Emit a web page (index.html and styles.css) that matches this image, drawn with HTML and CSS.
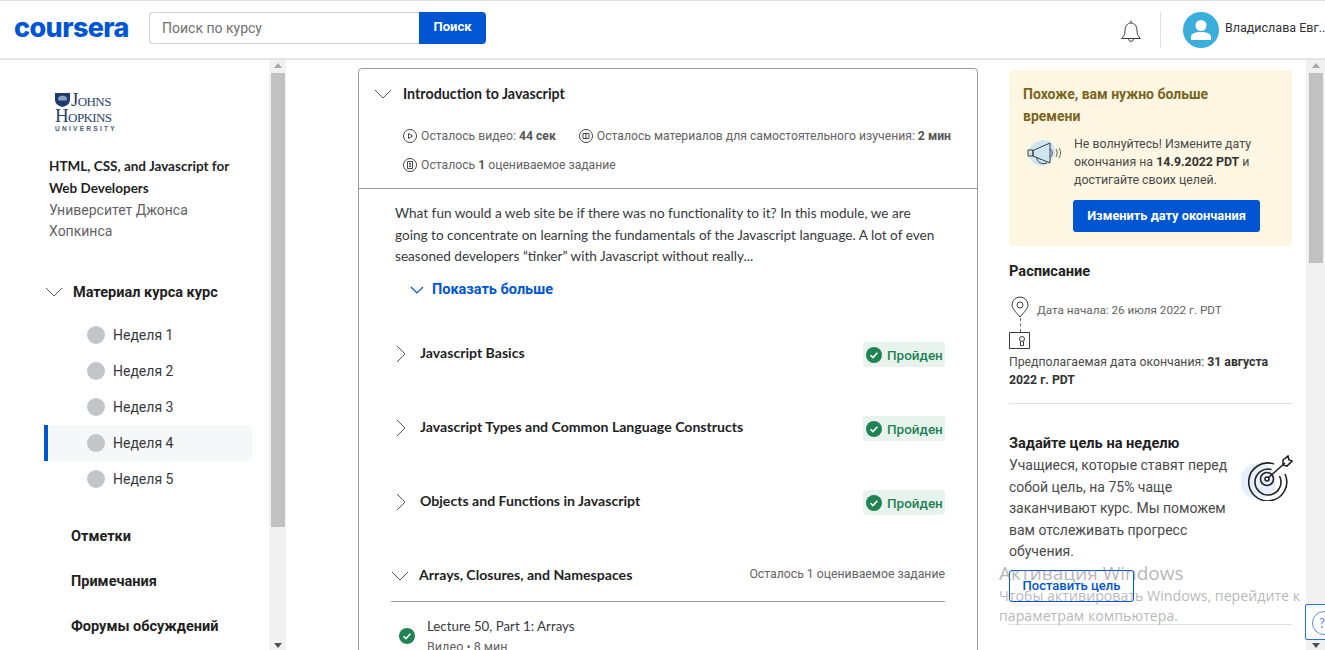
FILE: index.html
```html
<!DOCTYPE html>
<html lang="ru">
<head>
<meta charset="utf-8">
<title>Coursera</title>
<link rel="stylesheet" href="styles.css">
</head>
<body>
<header class="topbar">
  <div class="logo">coursera</div>
  <div class="search">
    <div class="search-input">Поиск по курсу</div>
    <div class="search-btn">Поиск</div>
  </div>
  <div class="spacer"></div>
  <svg class="bell" width="24" height="24" viewBox="0 0 24 24" fill="none" stroke="#3a3a3a" stroke-width="1"><path d="M2.500 20.500c2-2 3.500-3.500 3.500-8 0-4.500 2.500-7.500 6-7.500s6 3 6 7.500c0 4.500 1.500 6 3.500 8z"/><path d="M12 2.500v2.500"/><path d="M9.500 20.500c0 1.800 1 2.800 2.500 2.800s2.500-1 2.500-2.800"/></svg>
  <div class="vsep"></div>
  <div class="avatar"><svg width="36" height="36" viewBox="0 0 36 36"><circle cx="18" cy="18" r="18" fill="#3bafdc"/><circle cx="18" cy="13.500" r="5.500" fill="#fff"/><path d="M8 28v-3c0-3.500 4-5 10-5s10 1.500 10 5v3z" fill="#fff"/></svg></div>
  <div class="username">Владислава Евг...</div>
</header>

<div class="page">
  <aside class="sidebar">
    <div class="side-content">
      <div class="jhu">
        <svg class="shield" width="15" height="15" viewBox="0 0 14 14"><path d="M0 1h14v6c0 4-3 6-7 7-4-1-7-3-7-7z" fill="#1f3a6e"/><path d="M3 5c2-2 6-2 8 0v3H3z" fill="#8ea3c4"/></svg>
        <div class="jhu-names">
          <div class="jhu-johns">Johns</div>
          <div class="jhu-hopkins">Hopkins</div>
          <div class="jhu-univ">UNIVERSITY</div>
        </div>
      </div>
      <div class="course-name">HTML, CSS, and Javascript for Web Developers</div>
      <div class="course-school">Университет Джонса Хопкинса</div>
      <div class="nav-head">
        <svg class="chev-down" width="18" height="10" viewBox="0 0 18 10" fill="none" stroke="#555" stroke-width="1"><path d="M1 1l8 8 8-8"/></svg>
        <span>Материал курса курс</span>
      </div>
      <ul class="weeks">
        <li class="week"><span class="dot"></span>Неделя 1</li>
        <li class="week"><span class="dot"></span>Неделя 2</li>
        <li class="week"><span class="dot"></span>Неделя 3</li>
        <li class="week week-active"><span class="dot"></span>Неделя 4</li>
        <li class="week"><span class="dot"></span>Неделя 5</li>
      </ul>
      <div class="side-link side-link-first">Отметки</div>
      <div class="side-link">Примечания</div>
      <div class="side-link">Форумы обсуждений</div>
    </div>
    <div class="scrollbar scrollbar-left">
      <span class="arrow-up"></span>
      <div class="thumb thumb-left"></div>
      <span class="arrow-down"></span>
    </div>
  </aside>

  <main class="main">
    <section class="card">
      <div class="card-head">
        <div class="card-title-row">
          <svg width="18" height="10" viewBox="0 0 18 10" fill="none" stroke="#555" stroke-width="1"><path d="M1 1l8 8 8-8"/></svg>
          <h2 class="card-title">Introduction to Javascript</h2>
        </div>
        <div class="stats">
          <div class="stat">
            <svg width="14" height="14" viewBox="0 0 14 14" fill="none" stroke="#444" stroke-width="1"><circle cx="7" cy="7" r="6.500"/><path d="M5.500 4.500l4 2.500-4 2.500z"/></svg>
            <span>Осталось видео: <b>44 сек</b></span>
          </div>
          <div class="stat">
            <svg width="14" height="14" viewBox="0 0 14 14" fill="none" stroke="#444" stroke-width="1"><circle cx="7" cy="7" r="6.500"/><path d="M4 4.500h6v5H4zM7 4.500v5"/></svg>
            <span>Осталось материалов для самостоятельного изучения: <b>2 мин</b></span>
          </div>
          <div class="stat">
            <svg width="14" height="14" viewBox="0 0 14 14" fill="none" stroke="#444" stroke-width="1"><circle cx="7" cy="7" r="6.500"/><path d="M4.500 3.500h5v7h-5zM6 5.500h2M6 7h2M6 8.500h2"/></svg>
            <span>Осталось <b>1</b> оцениваемое задание</span>
          </div>
        </div>
      </div>
      <div class="card-body">
        <p class="desc">What fun would a web site be if there was no functionality to it? In this module, we are going to concentrate on learning the fundamentals of the Javascript language. A lot of even seasoned developers “tinker” with Javascript without really...</p>
        <div class="more">
          <svg width="14" height="8" viewBox="0 0 14 8" fill="none" stroke="#0056d2" stroke-width="1.200"><path d="M1 1l6 6 6-6"/></svg>
          <span>Показать больше</span>
        </div>
        <div class="lesson">
          <svg class="chev-right" width="10" height="18" viewBox="0 0 10 18" fill="none" stroke="#555" stroke-width="1"><path d="M1 1l8 8-8 8"/></svg>
          <div class="lesson-title">Javascript Basics</div>
          <div class="badge"><svg width="16" height="16" viewBox="0 0 16 16"><circle cx="8" cy="8" r="8" fill="#1f8354"/><path d="M4.500 8.200l2.400 2.400 4.500-4.800" fill="none" stroke="#fff" stroke-width="1.600"/></svg>Пройден</div>
        </div>
        <div class="lesson">
          <svg class="chev-right" width="10" height="18" viewBox="0 0 10 18" fill="none" stroke="#555" stroke-width="1"><path d="M1 1l8 8-8 8"/></svg>
          <div class="lesson-title">Javascript Types and Common Language Constructs</div>
          <div class="badge"><svg width="16" height="16" viewBox="0 0 16 16"><circle cx="8" cy="8" r="8" fill="#1f8354"/><path d="M4.500 8.200l2.400 2.400 4.500-4.800" fill="none" stroke="#fff" stroke-width="1.600"/></svg>Пройден</div>
        </div>
        <div class="lesson">
          <svg class="chev-right" width="10" height="18" viewBox="0 0 10 18" fill="none" stroke="#555" stroke-width="1"><path d="M1 1l8 8-8 8"/></svg>
          <div class="lesson-title">Objects and Functions in Javascript</div>
          <div class="badge"><svg width="16" height="16" viewBox="0 0 16 16"><circle cx="8" cy="8" r="8" fill="#1f8354"/><path d="M4.500 8.200l2.400 2.400 4.500-4.800" fill="none" stroke="#fff" stroke-width="1.600"/></svg>Пройден</div>
        </div>
        <div class="lesson-open">
          <svg width="18" height="10" viewBox="0 0 18 10" fill="none" stroke="#555" stroke-width="1"><path d="M1 1l8 8 8-8"/></svg>
          <div class="lesson-title">Arrays, Closures, and Namespaces</div>
          <div class="remain">Осталось 1 оцениваемое задание</div>
        </div>
        <div class="item">
          <svg width="16" height="16" viewBox="0 0 16 16"><circle cx="8" cy="8" r="8" fill="#1f8354"/><path d="M4.500 8.200l2.400 2.400 4.500-4.800" fill="none" stroke="#fff" stroke-width="1.600"/></svg>
          <div>
            <div class="item-title">Lecture 50, Part 1: Arrays</div>
            <div class="item-sub">Видео • 8 мин</div>
          </div>
        </div>
      </div>
    </section>
  </main>

  <aside class="rail">
    <div class="notice">
      <div class="notice-title">Похоже, вам нужно больше времени</div>
      <div class="notice-row">
        <svg class="mega" width="36" height="30" viewBox="0 0 36 30" fill="none" stroke="#3a3a3a" stroke-width="1"><path d="M3 12c1-6 8-11 15-11s12 6 11 13-8 14-15 13S2 19 3 12z" fill="#cfe6f2" stroke="none"/><path d="M7 11.500L24 4v20L7 17z"/><path d="M2 11h5v6H2z"/><path d="M11 19c-.5 4 5 7 10 5"/><path d="M24 10c3 1 3 7 0 8"/><path d="M30 10c1.500 2 1.500 6 0 8M33 9c2 3 2 7 0 10" stroke-width=".8"/></svg>
        <div class="notice-text">Не волнуйтесь! Измените дату окончания на <b>14.9.2022 PDT</b> и достигайте своих целей.</div>
      </div>
      <div class="notice-btn">Изменить дату окончания</div>
    </div>

    <h3 class="rail-title">Расписание</h3>
    <div class="sched-start">
      <svg width="18" height="22" viewBox="0 0 18 22" fill="none" stroke="#3a3a3a" stroke-width="1"><path d="M9 21C5 16 1 13 1 9a8 8 0 0 1 16 0c0 4-4 7-8 12z"/><circle cx="9" cy="9" r="3"/></svg>
      <span class="sched-date">Дата начала: 26 июля 2022 г. PDT</span>
    </div>
    <div class="dash"></div>
    <svg class="cert" width="22" height="18" viewBox="0 0 22 18" fill="none" stroke="#3a3a3a" stroke-width="1"><path d="M.500.500h20v16H.500z"/><circle cx="13" cy="7" r="2.500"/><path d="M11.500 9.500v4h3v-4"/></svg>
    <div class="sched-end">Предполагаемая дата окончания: <b>31 августа 2022 г. PDT</b></div>
    <hr class="rule">

    <div class="goal">
      <div class="goal-text">
        <h3 class="goal-title">Задайте цель на неделю</h3>
        <p class="goal-body">Учащиеся, которые ставят перед собой цель, на 75% чаще заканчивают курс. Мы поможем вам отслеживать прогресс обучения.</p>
      </div>
      <svg class="target" width="52" height="46" viewBox="0 0 52 46" fill="none" stroke="#222" stroke-width="1.600"><circle cx="17" cy="26" r="18" fill="#e8f0fc" stroke="none"/><path d="M44 19a19 19 0 1 1-11-10"/><path d="M38.500 21a13 13 0 1 1-8-6.500"/><circle cx="26" cy="24" r="6.500"/><circle cx="26" cy="24" r="2"/><path d="M27 23L44 8"/><path d="M42 5l5-4 1 4 3 1-5 5-4-1z"/></svg>
    </div>
    <div class="goal-btn">Поставить цель</div>
    <hr class="rule rule-last">
  </aside>

  <div class="scrollbar scrollbar-right">
    <span class="arrow-up"></span>
    <div class="thumb thumb-right"></div>
    <span class="arrow-down"></span>
  </div>
</div>

<div class="watermark">
  <div class="wm-title">Активация Windows</div>
  <div class="wm-text">Чтобы активировать Windows, перейдите к параметрам компьютера.</div>
</div>
<div class="help"><span>?</span></div>
</body>
</html>
```
FILE: styles.css
```css
* { box-sizing: border-box; }
html, body { margin: 0; height: 650px; overflow: hidden; background: #fff; }
body { font-family: "Lato", "Roboto", sans-serif; font-size: 14px; color: #373a3c; position: relative; }
h2, h3, p, ul { margin: 0; padding: 0; }
b { font-weight: 700; }

.topbar { height: 60px; display: flex; align-items: center; border-top: 1px solid #e1e1e1; border-bottom: 2px solid #e4e4e4; padding-left: 14px; }
.logo { width: 135px; margin-bottom: 4px; font-family: "Inter", sans-serif; font-weight: 800; font-size: 27px; letter-spacing: -0.600px; color: #0056d2; line-height: 30px; }
.search { display: flex; height: 32px; margin-bottom: 4px; }
.search-input { width: 270px; border: 1px solid #cfd0d8; border-right: 0; border-radius: 4px 0 0 4px; padding-left: 12px; font-family: "Roboto", sans-serif; font-size: 14px; line-height: 30px; color: #6f6f6f; }
.search-btn { width: 67px; background: #0056d2; color: #fff; border-radius: 0 4px 4px 0; font-family: "Roboto", sans-serif; font-weight: 700; font-size: 13px; line-height: 30px; text-align: center; }
.spacer { flex: 1; }
.bell { margin-right: 17px; }
.vsep { width: 1px; height: 36px; background: #e1e1e1; margin-right: 22px; }
.avatar { width: 36px; height: 36px; margin-right: 6px; }
.username { width: 100px; margin-bottom: 4px; font-family: "Roboto", sans-serif; font-size: 12.500px; color: #333; white-space: nowrap; overflow: hidden; }

.page { display: flex; height: 590px; overflow: hidden; }
.sidebar { width: 286px; flex: none; display: flex; }
.side-content { width: 269px; padding: 0 0 0 44px; }

.jhu { display: flex; gap: 1px; padding: 32px 0 0 11px; height: 92px; color: #2a3f6f; }
.shield { flex: none; }
.jhu-names { font-family: "Liberation Serif", serif; line-height: 16px; font-size: 19px; letter-spacing: -0.600px; font-variant: small-caps; }
.jhu-hopkins { margin-left: -16px; }
.jhu-univ { margin-left: -16px; font-family: "Liberation Sans", sans-serif; font-variant: normal; font-size: 6.500px; font-weight: 700; letter-spacing: 2.300px; line-height: 10px; color: #4a5a78; }

.course-name { padding-left: 5px; width: 200px; font-weight: 700; font-size: 13.500px; line-height: 22px; color: #1f1f1f; margin-top: 3px; }
.course-school { padding-left: 5px; width: 170px; margin-top: 1px; font-family: "Roboto", sans-serif; font-size: 14px; line-height: 21px; color: #636363; }

.nav-head { display: flex; align-items: center; gap: 10px; margin-top: 38px; height: 24px; padding-left: 1px; font-family: "Roboto", sans-serif; font-weight: 700; font-size: 14.500px; color: #1f1f1f; }
.weeks { list-style: none; margin-top: 13px; }
.week { display: flex; align-items: center; height: 36px; width: 208px; padding-left: 43px; font-family: "Roboto", sans-serif; font-size: 14px; color: #373a3c; }
.week-active { background: #f5f7f8; border-left: 4px solid #0056d2; padding-left: 39px; border-radius: 0 4px 4px 0; }
.dot { width: 18px; height: 18px; border-radius: 50%; background: #c4c5c8; margin-right: 8px; flex: none; }
.side-link { padding-left: 27px; font-family: "Roboto", sans-serif; font-weight: 700; font-size: 14.500px; color: #1f1f1f; line-height: 20px; margin-top: 25px; }
.side-link-first { margin-top: 30px; }

.scrollbar { flex: none; background: #f1f1f1; position: relative; display: flex; flex-direction: column; align-items: center; }
.scrollbar-left { width: 17px; }
.scrollbar-right { width: 19px; }
.thumb { background: #c1c1c1; width: 14px; }
.thumb-left { height: 454px; margin-top: 13px; }
.thumb-right { height: 190px; margin-top: 13px; width: 14px; }
.arrow-up, .arrow-down { position: absolute; width: 0; height: 0; border-left: 4px solid transparent; border-right: 4px solid transparent; }
.arrow-up { top: 3px; border-bottom: 5px solid #a8a8a8; }
.arrow-down { bottom: 2px; border-top: 5px solid #505050; }

.main { flex: none; width: 723px; padding: 8px 0 0 72px; }
.card { width: 620px; height: 640px; border: 1px solid #9a9a9f; border-radius: 4px 4px 0 0; }
.card-head { height: 120px; border-bottom: 1px solid #9a9a9f; }
.card-title-row { display: flex; align-items: center; gap: 11px; padding: 13px 0 0 15px; height: 36px; }
.card-title { font-size: 14.250px; font-weight: 700; color: #1f1f1f; line-height: 20px; }
.stats { display: flex; flex-wrap: wrap; gap: 0 23px; padding: 16px 0 0 44px; }
.stat { display: flex; align-items: center; gap: 4px; height: 29px; font-family: "Roboto", sans-serif; font-size: 12.200px; color: #636363; white-space: nowrap; }
.stat b { color: #555; }

.card-body { padding: 14px 32px 0 36px; }
.desc { width: 546px; font-size: 13.600px; line-height: 21.500px; color: #373a3c; }
.more { display: flex; align-items: center; gap: 8px; padding-left: 15px; margin-top: 12px; height: 20px; font-family: "Roboto", sans-serif; font-weight: 700; font-size: 14.500px; color: #0056d2; }

.lesson { display: flex; align-items: center; height: 26px; margin-top: 48px; }
.more + .lesson { margin-top: 42px; }
.chev-right { margin: -2px 14px 0 1px; }
.lesson-title { flex: 1; font-size: 14.100px; font-weight: 700; color: #1f1f1f; line-height: 20px; margin-top: -4px; }
.badge { display: flex; align-items: center; gap: 5px; width: 82px; height: 25px; padding-left: 3px; background: #e8f3ee; border-radius: 3px; font-family: "Roboto", sans-serif; font-weight: 500; font-size: 13.500px; color: #1f8354; white-space: nowrap; }

.lesson-open { display: flex; align-items: center; gap: 10px; height: 43px; margin: 43px 0 0 -4px; padding: 0 0 8px; border-bottom: 1px solid #9a9a9f; }
.lesson-open .lesson-title { margin-top: -2px; }
.remain { font-family: "Roboto", sans-serif; font-size: 12.250px; color: #636363; white-space: nowrap; margin-top: -4px; }

.item { display: flex; align-items: center; gap: 12px; padding: 14px 0 0 4px; }
.item-title { font-size: 13.300px; color: #373a3c; line-height: 20px; }
.item-sub { margin-top: 1px; font-family: "Roboto", sans-serif; font-size: 12.500px; color: #636363; line-height: 20px; }

.rail { flex: none; width: 297px; padding: 10px 14px 0 0; margin-left: 0; }
.notice { width: 283px; height: 176px; background: #fdf6e3; border-radius: 4px; padding: 13px 14px 0; }
.notice-title { width: 220px; font-family: "Roboto", sans-serif; font-weight: 700; font-size: 14px; line-height: 22px; color: #7a6520; }
.notice-row { display: flex; gap: 12px; margin-top: 8px; padding-left: 3px; }
.mega { margin-top: 4px; flex: none; }
.notice-text { font-family: "Roboto", sans-serif; font-size: 12.350px; line-height: 18px; color: #4a4a4a; width: 190px; }
.notice-text b { color: #333; }
.notice-btn { width: 187px; height: 32px; margin: 11px 0 0 50px; background: #0056d2; border-radius: 3px; color: #fff; font-family: "Roboto", sans-serif; font-weight: 700; font-size: 12.800px; line-height: 31px; text-align: center; }

.rail-title { font-family: "Roboto", sans-serif; font-weight: 700; font-size: 14.600px; line-height: 20px; color: #1f1f1f; margin-top: 15px; }
.sched-start { display: flex; align-items: center; gap: 8px; margin-top: 15px; padding-left: 2px; font-family: "Roboto", sans-serif; font-size: 11.700px; color: #636363; }
.sched-date { padding-top: 5px; }
.dash { height: 14px; width: 0; border-left: 1px dashed #666; margin-left: 11px; }
.cert { display: block; }
.sched-end { font-family: "Roboto", sans-serif; font-size: 12.250px; line-height: 18px; color: #4a4a4a; width: 283px; margin-top: 3px; }
.sched-end b { color: #333; }
.rule { border: 0; border-top: 1px solid #e1e1e1; margin: 14px 0 0; width: 283px; }
.goal { display: flex; width: 283px; margin-top: 29px; }
.goal-text { width: 232px; flex: none; }
.goal-title { font-family: "Roboto", sans-serif; font-weight: 700; font-size: 14.600px; line-height: 20px; color: #1f1f1f; margin-bottom: 2px; }
.goal-body { width: 225px; font-family: "Roboto", sans-serif; font-size: 14px; line-height: 21.600px; color: #4a4a4a; }
.target { margin-top: 22px; flex: none; }
.goal-btn { width: 125px; height: 32px; margin-top: 7px; border: 1px solid #0056d2; border-radius: 3px; color: #0056d2; font-family: "Roboto", sans-serif; font-weight: 500; font-size: 13px; line-height: 30px; text-align: center; }
.rule-last { margin-top: 22px; }

.watermark { position: absolute; left: 999px; top: 561px; width: 320px; color: rgba(120,120,120,.55); font-family: "Open Sans", sans-serif; pointer-events: none; }
.wm-title { font-size: 19px; line-height: 24px; }
.wm-text { font-size: 14.200px; line-height: 20px; margin-top: 1px; }
.help { position: absolute; left: 1305px; top: 604px; width: 24px; height: 36px; background: #fff; border: 1px solid #2a73d9; border-radius: 2px 0 0 2px; padding: 6px 0 0 6px; }
.help span { display: block; width: 24px; height: 24px; border: 1px solid #5a8fdd; border-radius: 50%; color: #5a8fdd; font-size: 13px; line-height: 22px; padding-left: 6px; }
```
